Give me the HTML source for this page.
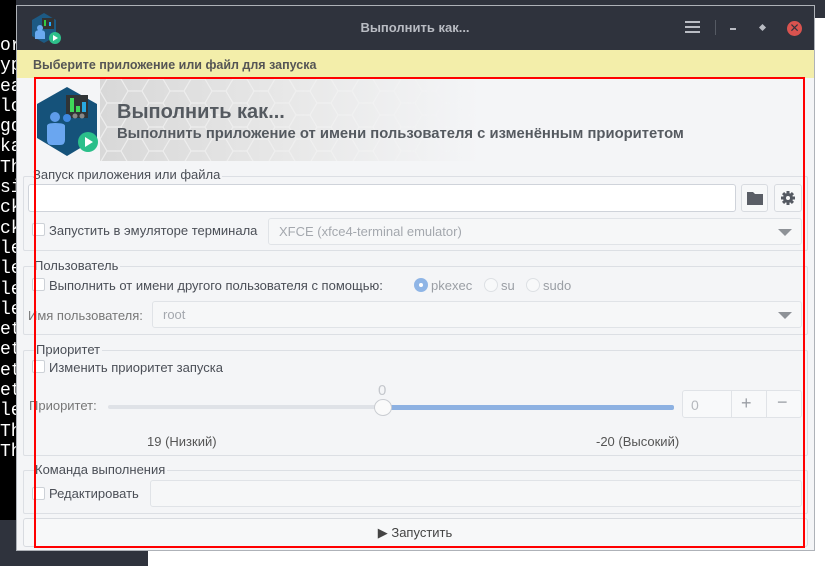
<!DOCTYPE html>
<html><head><meta charset="utf-8"><style>
*{box-sizing:border-box;margin:0;padding:0}
body{width:825px;height:566px;overflow:hidden;position:relative;background:#fff;font-family:"Liberation Sans","DejaVu Sans",sans-serif;font-size:13px;color:#4b4f57}
.a{position:absolute}
.term{left:0;top:0;width:16px;height:520px;background:#000;color:#fff;font-family:"Liberation Mono",monospace;font-size:18px;line-height:20.3px;overflow:hidden;padding-top:36px}
.frame{border:1px solid #dcdfe4;border-radius:2px}
.lbl{background:#f4f5f7;padding-right:2px;line-height:14px}
.ent{background:#fff;border:1px solid #cfd3da;border-radius:3px}
.dis{background:#f6f7f8;border:1px solid #e0e3e7;border-radius:3px;color:#a4a8ae}
.cb{width:13px;height:13px;border:1px solid #cdd1d7;border-radius:2px;background:#fff}
.rad{width:14px;height:14px;border:1px solid #dde0e4;border-radius:50%;background:#f8f9fa}
.tri{width:0;height:0;border-left:7px solid transparent;border-right:7px solid transparent;border-top:7px solid #8e9297}
.btn{background:#f7f8f9;border:1px solid #d8dbe0;border-radius:3px}
</style></head><body>
<div class="a" style="left:0;top:0;width:825px;height:18px;background:#2f333d"></div>
<div class="a" style="left:148px;top:550px;width:677px;height:16px;background:#fff"></div>
<div class="a" style="left:0;top:520px;width:148px;height:46px;background:#2f333d"></div>
<div class="a term">or<br>ype<br>eac<br>lo<br>gdl<br>ka<br>Th<br>si<br>ck<br>ck<br>lev<br>lev<br>lev<br>lev<br>et<br>et<br>et<br>et<br>lev<br>Th<br>Th</div>

<!-- window -->
<div class="a" style="left:16px;top:5px;width:799px;height:546px;background:#f4f5f7;border:1px solid #aeb2b8"></div>
<div class="a" style="left:17px;top:6px;width:797px;height:44px;background:#2f333d"></div>
<svg class="a" style="left:30px;top:12px" width="32" height="34" viewBox="0 0 32 34">
<polygon points="14,1 26,8 26,24 14,31 2,24 2,8" fill="#1d5a84"/>
<rect x="12" y="6" width="12" height="11" fill="#333"/><rect x="14" y="8" width="2" height="6" fill="#3c4"/><rect x="19" y="10" width="2" height="4" fill="#2af"/>
<circle cx="10" cy="16" r="3" fill="#6aaaf0"/><path d="M5 21q0-3 5-3t5 3v6h-10z" fill="#6aaaf0"/>
<circle cx="25" cy="26" r="6" fill="#2ec08b"/><polygon points="23,23 23,29 28,26" fill="#fff"/></svg>
<div class="a" style="left:0;width:830px;top:20px;text-align:center;font-weight:bold;color:#b9bcc3;font-size:13px">Выполнить как...</div>
<div class="a" style="left:685px;top:21px;width:15px;height:2px;background:#b9bcc3;box-shadow:0 5px 0 #b9bcc3,0 10px 0 #b9bcc3"></div>
<div class="a" style="left:715px;top:20px;width:1px;height:15px;background:#555a63"></div>
<div class="a" style="left:730px;top:28px;width:6px;height:2px;background:#b9bcc3"></div>
<div class="a" style="left:760px;top:25px;width:5px;height:5px;background:#b9bcc3;transform:rotate(45deg)"></div>
<div class="a" style="left:787px;top:21px;width:15px;height:15px;border-radius:50%;background:#d9534f;color:#2f333d;font-size:12px;font-weight:bold;text-align:center;line-height:15px">✕</div>
<div class="a" style="left:17px;top:50px;width:797px;height:28px;background:#f3eeaa"></div>
<div class="a" style="left:33px;top:58px;font-weight:bold;font-size:12.5px;color:#555">Выберите приложение или файл для запуска</div>

<!-- banner -->
<svg class="a" style="left:100px;top:79px" width="380" height="82">
<defs><linearGradient id="g" x1="0" x2="1"><stop offset="0" stop-color="#d8d8d8"/><stop offset="0.5" stop-color="#e8e8e8"/><stop offset="1" stop-color="#f4f5f7"/></linearGradient>
<linearGradient id="m" x1="0" x2="1"><stop offset="0" stop-color="#fff"/><stop offset="0.7" stop-color="#fff" stop-opacity=".6"/><stop offset="1" stop-color="#fff" stop-opacity="0"/></linearGradient>
<mask id="mk"><rect width="380" height="82" fill="url(#m)"/></mask>
<pattern id="h" width="42" height="24" patternUnits="userSpaceOnUse"><path d="M0 12l7-12h14l7 12-7 12h-14z M28 12h14" fill="none" stroke="#f7f7f7" stroke-width="1.2"/></pattern></defs>
<rect width="380" height="82" fill="url(#g)"/><rect width="380" height="82" fill="url(#h)" mask="url(#mk)" opacity=".7"/></svg>
<svg class="a" style="left:35px;top:86px" width="66" height="72" viewBox="0 0 66 72">
<polygon points="32,1 62,18 62,52 32,70 2,52 2,18" fill="#15527a"/>
<rect x="31" y="9" width="22" height="23" fill="#303436"/><rect x="35" y="12" width="4" height="14" fill="#3fd95a"/><rect x="41" y="20" width="4" height="6" fill="#3fd95a"/><rect x="47" y="16" width="4" height="10" fill="#29a9e0"/>
<circle cx="40" cy="30" r="2.5" fill="#888"/><circle cx="47" cy="30" r="2.5" fill="#888"/>
<circle cx="20" cy="31" r="5" fill="#5f9cea"/><circle cx="32" cy="32" r="4" fill="#3f88e0"/><path d="M12 40q0-3 8-3 10 0 10 3v14q0 5-5 5h-8q-5 0-5-5z" fill="#6aa6f0"/>
<circle cx="53" cy="56" r="10" fill="#2bbf8a"/><polygon points="50,51 50,61 58,56" fill="#fff"/></svg>
<div class="a" style="left:117px;top:101px;font-weight:bold;font-size:20px;color:#555a60">Выполнить как...</div>
<div class="a" style="left:117px;top:126px;font-weight:bold;font-size:14.8px;color:#555a60">Выполнить приложение от имени пользователя с изменённым приоритетом</div>

<!-- frame 1 -->
<div class="a frame" style="left:23px;top:176px;width:785px;height:75px"></div>
<div class="a lbl" style="left:33px;top:168px">Запуск приложения или файла</div>
<div class="a ent" style="left:28px;top:184px;width:708px;height:28px"></div>
<div class="a btn" style="left:741px;top:184px;width:27px;height:28px"></div>
<svg class="a" style="left:746px;top:189px" width="18" height="18"><path d="M1 3h6l2 2h8v11h-16z" fill="#5a5e66"/></svg>
<div class="a btn" style="left:774px;top:184px;width:28px;height:28px"></div>
<svg class="a" style="left:780px;top:190px" width="16" height="16" viewBox="0 0 16 16"><g fill="#555a62"><circle cx="8" cy="8" r="5"/><rect x="6.5" y="1" width="3" height="14"/><rect x="1" y="6.5" width="14" height="3"/><rect x="6.5" y="1" width="3" height="14" transform="rotate(45 8 8)"/><rect x="6.5" y="1" width="3" height="14" transform="rotate(-45 8 8)"/></g><circle cx="8" cy="8" r="2" fill="#f7f8f9"/></svg>
<div class="a cb" style="left:32px;top:223px"></div>
<div class="a" style="left:49px;top:223px">Запустить в эмуляторе терминала</div>
<div class="a dis" style="left:268px;top:218px;width:534px;height:27px;padding:5px 10px">XFCE (xfce4-terminal emulator)</div>
<div class="a tri" style="left:778px;top:229px"></div>

<!-- frame 2 -->
<div class="a frame" style="left:23px;top:266px;width:785px;height:69px"></div>
<div class="a lbl" style="left:34px;top:259px">Пользователь</div>
<div class="a cb" style="left:32px;top:278px"></div>
<div class="a" style="left:49px;top:278px">Выполнить от имени другого пользователя с помощью:</div>
<div class="a rad" style="left:414px;top:278px;background:#8fb5e6;border-color:#8fb5e6"></div>
<div class="a" style="left:419px;top:283px;width:4px;height:4px;border-radius:50%;background:#fff"></div>
<div class="a" style="left:431px;top:278px;color:#9a9ea4">pkexec</div>
<div class="a rad" style="left:484px;top:278px"></div>
<div class="a" style="left:501px;top:278px;color:#9a9ea4">su</div>
<div class="a rad" style="left:526px;top:278px"></div>
<div class="a" style="left:543px;top:278px;color:#9a9ea4">sudo</div>
<div class="a" style="left:28px;top:308px;color:#777">Имя пользователя:</div>
<div class="a dis" style="left:152px;top:301px;width:650px;height:27px;padding:5px 10px">root</div>
<div class="a tri" style="left:778px;top:312px"></div>

<!-- frame 3 -->
<div class="a frame" style="left:23px;top:350px;width:785px;height:106px"></div>
<div class="a lbl" style="left:36px;top:343px">Приоритет</div>
<div class="a cb" style="left:32px;top:360px"></div>
<div class="a" style="left:49px;top:360px">Изменить приоритет запуска</div>
<div class="a" style="left:378px;top:382px;color:#c4c7cc;font-size:15px">0</div>
<div class="a" style="left:29px;top:398px;color:#777">Приоритет:</div>
<div class="a" style="left:108px;top:405px;width:276px;height:4px;background:#dfe2e7;border-radius:2px"></div>
<div class="a" style="left:384px;top:405px;width:290px;height:5px;background:#8db1e2;border-radius:2px"></div>
<div class="a" style="left:374px;top:399px;width:18px;height:17px;border-radius:50%;background:#fafafa;border:1px solid #c9ccd1"></div>
<div class="a dis" style="left:682px;top:390px;width:120px;height:28px;background:#f8f9fa"></div>
<div class="a" style="left:731px;top:390px;width:1px;height:28px;background:#e0e3e7"></div>
<div class="a" style="left:766px;top:390px;width:1px;height:28px;background:#e0e3e7"></div>
<div class="a" style="left:691px;top:397px;color:#b5b8bd;font-size:14px">0</div>
<div class="a" style="left:741px;top:393px;color:#9a9ea4;font-size:18px">+</div>
<div class="a" style="left:777px;top:392px;color:#9a9ea4;font-size:18px">−</div>
<div class="a" style="left:147px;top:434px;color:#555">19 (Низкий)</div>
<div class="a" style="left:596px;top:434px;color:#555">-20 (Высокий)</div>

<!-- frame 4 -->
<div class="a frame" style="left:23px;top:470px;width:785px;height:44px"></div>
<div class="a lbl" style="left:35px;top:463px">Команда выполнения</div>
<div class="a cb" style="left:32px;top:487px"></div>
<div class="a" style="left:49px;top:486px">Редактировать</div>
<div class="a dis" style="left:150px;top:480px;width:652px;height:27px"></div>
<div class="a btn" style="left:23px;top:518px;width:785px;height:29px"></div>
<div class="a" style="left:0;width:830px;top:525px;text-align:center;color:#444">▶ Запустить</div>

<div class="a" style="left:34px;top:77px;width:771px;height:471px;border:2px solid #f00"></div>
</body></html>
